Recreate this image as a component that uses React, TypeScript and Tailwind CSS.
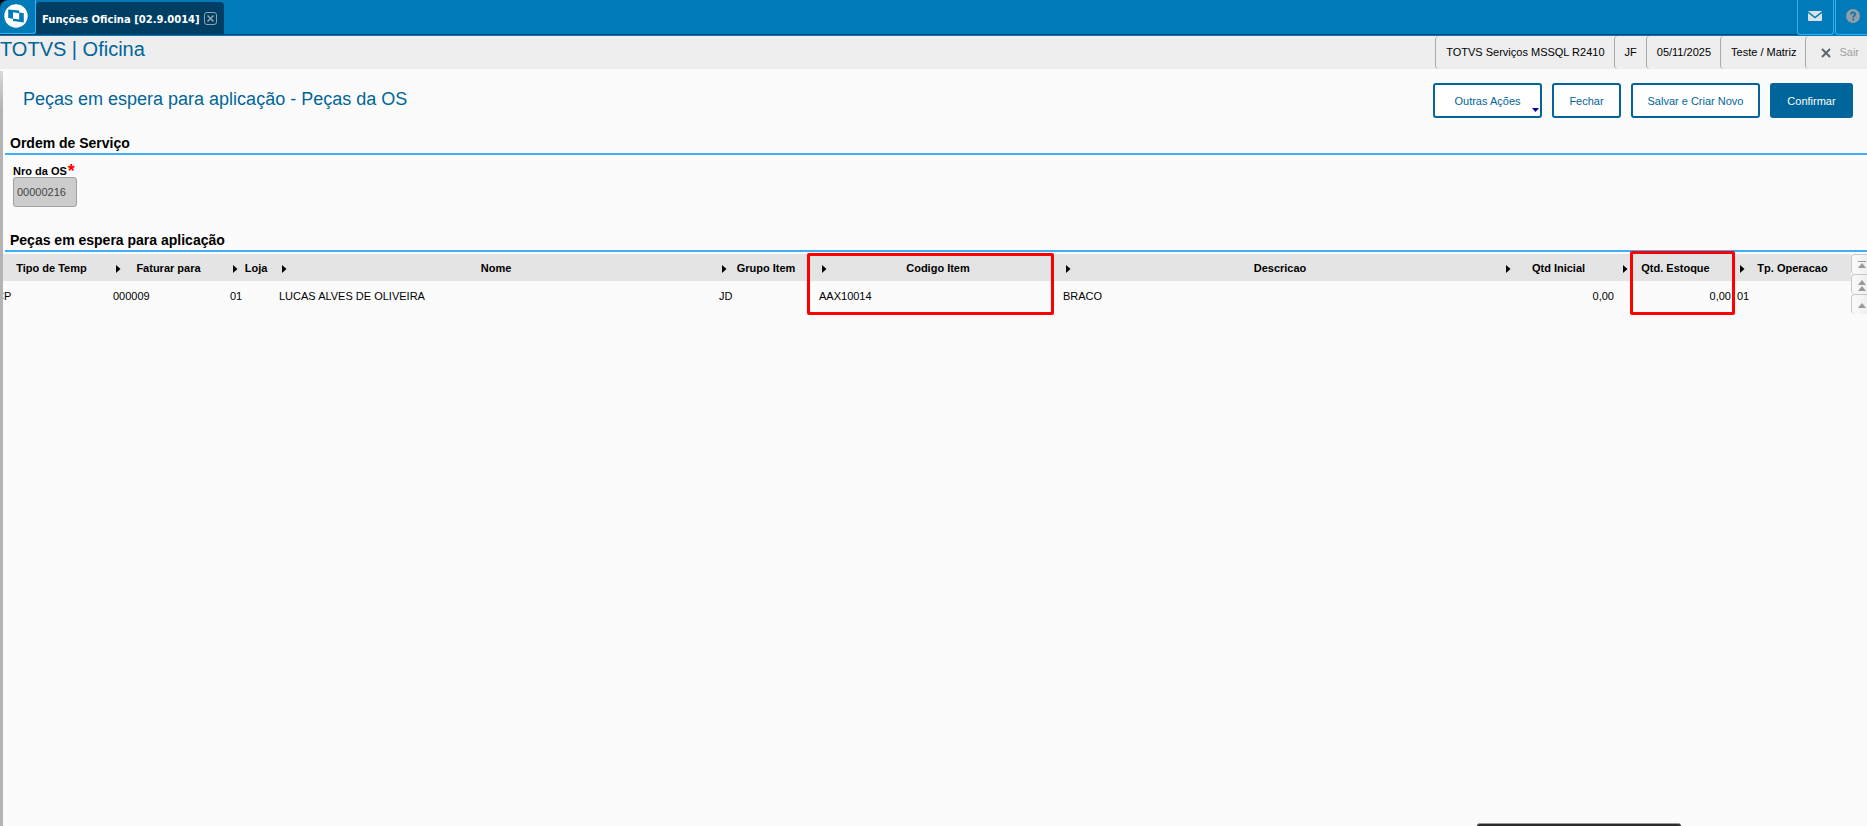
import { useState } from "react";

const SESSION_INFO = ["TOTVS Serviços MSSQL R2410", "JF", "05/11/2025", "Teste / Matriz"];

const COLUMNS = [
  { label: "Tipo de Temp", value: "CP", width: "w-[117px]" },
  { label: "Faturar para", value: "000009", width: "w-[117px]" },
  { label: "Loja", value: "01", width: "w-[49px]", pad: "pr-0.5" },
  { label: "Nome", value: "LUCAS ALVES DE OLIVEIRA", width: "" },
  { label: "Grupo Item", value: "JD", width: "w-[100px]" },
  {
    label: "Codigo Item",
    value: "AAX10014",
    width: "w-[244px]",
    mark: "-left-[9px] right-[6px] -top-px h-[62px]",
  },
  { label: "Descricao", value: "BRACO", width: "" },
  { label: "Qtd Inicial", value: "0,00", width: "w-[117px]", numeric: true },
  {
    label: "Qtd. Estoque",
    value: "0,00",
    width: "w-[117px]",
    numeric: true,
    mark: "left-[13px] -right-px -top-[3px] h-[64px]",
  },
  { label: "Tp. Operacao", value: "01", width: "w-[117px]" },
];

function Logo() {
  return (
    <svg viewBox="0 0 24 24" className="h-6 w-6">
      <circle cx="12" cy="12" r="11.7" fill="#fff" />
      <path
        d="M4.2 5.4 L15.2 6.6 V8.4 L19.8 9.2 V18.6 L9 17 V14.8 L4.2 14 Z"
        fill="#007ab8"
      />
      <path d="M9 8.2 L15.2 9.2 V15.4 L9 14.4 Z" fill="#fff" />
    </svg>
  );
}

function CloseTabIcon() {
  return (
    <svg viewBox="0 0 14 14" className="h-3.5 w-3.5" fill="none" stroke="#8da4b3">
      <rect x="0.5" y="0.5" width="12" height="12" rx="2.5" />
      <path d="M3.5 3.5 L9.5 9.5 M9.5 3.5 L3.5 9.5" strokeWidth="1.6" />
    </svg>
  );
}

function TopBar() {
  return (
    <header className="bg-black">
      <div className="flex h-9 overflow-hidden rounded-tl-lg border-b border-[#007ab8] bg-[#007ab8]">
        <div className="flex grow border-b border-[#004468]">
          <button
            type="button"
            aria-label="Início"
            className="flex w-9 justify-center rounded-br border-r border-b border-[#3cacf5] pt-1 pr-1"
          >
            <Logo />
          </button>
          <div className="mt-0.5 flex items-center gap-1 rounded-t bg-[#003f63] px-1.5 pt-0.5">
            <span className="font-['DejaVu_Sans'] text-[10px] font-bold text-white">
              Funções Oficina [02.9.0014]
            </span>
            <button type="button" aria-label="Fechar aba">
              <CloseTabIcon />
            </button>
          </div>
        </div>
        <div className="-mr-[5px] flex gap-px">
          <button
            type="button"
            aria-label="Mensagens"
            className="flex w-[37px] justify-center rounded-b border-x border-b border-[#3cacf5] pt-[11px] pr-0.5"
          >
            <svg viewBox="0 0 14 10" className="h-2.5 w-3.5">
              <rect width="14" height="10" rx="1" fill="#d9e2e8" />
              <path d="M0 1 L7 6.5 L14 1" fill="none" stroke="#007ab8" strokeWidth="1.4" />
            </svg>
          </button>
          <button
            type="button"
            aria-label="Ajuda"
            className="flex w-[37px] justify-center rounded-b border-x border-b border-[#3cacf5] pt-[9px] pr-0.5"
          >
            <svg viewBox="0 0 14 14" className="h-3.5 w-3.5" fill="none">
              <circle cx="7" cy="7" r="7" fill="#8f9ea8" />
              <path
                d="M4.9 5.4 C4.9 2.6 9.3 2.8 9.2 5.3 C9.2 6.7 7.2 6.8 7.2 8.6"
                stroke="#0b6fa4"
                strokeWidth="1.6"
              />
              <circle cx="7.2" cy="10.6" r="1" fill="#0b6fa4" />
            </svg>
          </button>
        </div>
      </div>
    </header>
  );
}

function SessionBar() {
  return (
    <div className="flex h-[33px] justify-between bg-[#eeeeee]">
      <h1 className="text-[20px] leading-[26px] text-[#00659a]">TOTVS | Oficina</h1>
      <div className="flex">
        {SESSION_INFO.map((info) => (
          <span
            key={info}
            className="flex items-center rounded-l border-l border-[#a8a8a8] pr-[9px] pl-2.5 text-[11px] text-black"
          >
            {info}
          </span>
        ))}
        <button
          type="button"
          className="flex items-center gap-2 rounded-l border-l border-[#a8a8a8] pr-2 pl-[15px] text-[11px] text-[#a0a0a0]"
        >
          <svg viewBox="0 0 10 10" className="h-2.5 w-2.5" stroke="#5d6770" strokeWidth="2">
            <path d="M1 1 L9 9 M9 1 L1 9" />
          </svg>
          Sair
        </button>
      </div>
    </div>
  );
}

function ActionButton({ children, className = "" }: { children: React.ReactNode; className?: string }) {
  return (
    <button
      type="button"
      className={`relative h-[35px] rounded-[3px] border-2 border-[#00659a] pt-0.5 text-[11px] ${className}`}
    >
      {children}
    </button>
  );
}

function SectionTitle({ children }: { children: React.ReactNode }) {
  return (
    <h3 className="ml-0.5 border-b-2 border-[#3eaef8] pl-[5px] text-[14px] leading-5 font-bold text-black">
      {children}
    </h3>
  );
}

function ScrollButton({ label, children }: { label: string; children: React.ReactNode }) {
  return (
    <button
      type="button"
      aria-label={label}
      className="flex h-5 w-5 items-center justify-center rounded-l-sm border-t border-l border-[#c8c8c8] bg-linear-to-r from-[#fbfbfb] to-[#ececec]"
    >
      <svg viewBox="0 0 8 12" className="h-3 w-2" fill="#999">
        {children}
      </svg>
    </button>
  );
}

function PartsTable() {
  return (
    <div className="mt-0.5 flex">
      <div className="min-w-0 grow overflow-x-clip">
        <table className="-ml-2.5 w-[calc(100%+10px)] table-fixed border-collapse text-[11px] text-black">
          <thead>
            <tr className="h-[27px] bg-[#e4e4e4]">
              {COLUMNS.map((col, i) => (
                <th key={col.label} className={`relative p-0 font-bold ${col.width}`}>
                  <div className={`flex items-center pt-0.5 pl-1.5 ${col.pad ?? "pr-[11px]"}`}>
                    <svg viewBox="0 0 5 8" className="h-2 w-[5px]">
                      {i > 0 && <path d="M0 0 L4.5 4 L0 8 Z" />}
                    </svg>
                    <span className="grow text-center whitespace-nowrap">{col.label}</span>
                  </div>
                  {col.mark && (
                    <div
                      className={`pointer-events-none absolute rounded-xs border-3 border-[#ff0000] ${col.mark}`}
                    />
                  )}
                </th>
              ))}
            </tr>
          </thead>
          <tbody>
            <tr className="h-[30px]">
              {COLUMNS.map((col) => (
                <td
                  key={col.label}
                  className={`px-[3px] py-0 whitespace-nowrap ${col.numeric ? "text-right" : ""}`}
                >
                  {col.value}
                </td>
              ))}
            </tr>
          </tbody>
        </table>
      </div>
      <div className="w-4 shrink-0 overflow-hidden">
        <ScrollButton label="Primeiro registro">
          <path d="M0 2 H8 V3 H0 Z M4 4 L8 9 H0 Z" />
        </ScrollButton>
        <ScrollButton label="Página anterior">
          <path d="M4 1 L8 6 H0 Z M4 7 L8 12 H0 Z" />
        </ScrollButton>
        <ScrollButton label="Registro anterior">
          <path d="M4 4 L8 9 H0 Z" />
        </ScrollButton>
      </div>
    </div>
  );
}

export default function App() {
  const [os, setOs] = useState("00000216");

  return (
    <div className="relative flex min-h-screen flex-col overflow-x-hidden bg-[#fbfbfb] font-['Liberation_Sans',sans-serif]">
      <TopBar />
      <SessionBar />

      <div className="flex grow">
        <div className="mt-0.5 w-[3px] shrink-0 bg-linear-to-b from-[#d8d8d8] to-[#b4b4b4] to-5%" />
        <main className="min-w-0 grow">
          <div className="flex justify-between pt-3.5 pr-3.5 pl-5">
            <h2 className="text-[18px] leading-8 text-[#00659a]">
              Peças em espera para aplicação - Peças da OS
            </h2>
            <div className="flex gap-2.5">
              <ActionButton className="w-[109px] bg-white text-[#00659a]">
                Outras Ações
                <svg viewBox="0 0 7 4" className="absolute right-px bottom-1 h-1 w-[7px]" fill="#0000a0">
                  <path d="M0 0 H7 L3.5 4 Z" />
                </svg>
              </ActionButton>
              <ActionButton className="w-[69px] bg-white text-[#00659a]">Fechar</ActionButton>
              <ActionButton className="w-[129px] bg-white text-[#00659a]">
                Salvar e Criar Novo
              </ActionButton>
              <ActionButton className="w-[83px] bg-[#00659a] text-white">Confirmar</ActionButton>
            </div>
          </div>

          <section className="mt-[15px]">
            <SectionTitle>Ordem de Serviço</SectionTitle>
            <div className="mt-2.5 flex flex-col items-start pl-2.5">
              <label htmlFor="nro-os" className="flex gap-px text-[11px] leading-3 font-bold text-black">
                Nro da OS
                <span className="text-[18px] leading-3 text-[#ff0000]">*</span>
              </label>
              <input
                id="nro-os"
                value={os}
                readOnly
                onChange={(e) => setOs(e.target.value)}
                className="h-[30px] w-16 rounded-[3px] border border-[#a0a0a0] bg-[#cccccc] px-[3px] text-[11px] text-[#444]"
              />
            </div>
          </section>

          <section className="mt-[23px]">
            <SectionTitle>Peças em espera para aplicação</SectionTitle>
            <PartsTable />
          </section>
        </main>
      </div>

      <div className="absolute right-[186px] bottom-0 h-[3px] w-[204px] rounded-t-md border-t border-[#999] bg-[#2b2b2b]" />
    </div>
  );
}
